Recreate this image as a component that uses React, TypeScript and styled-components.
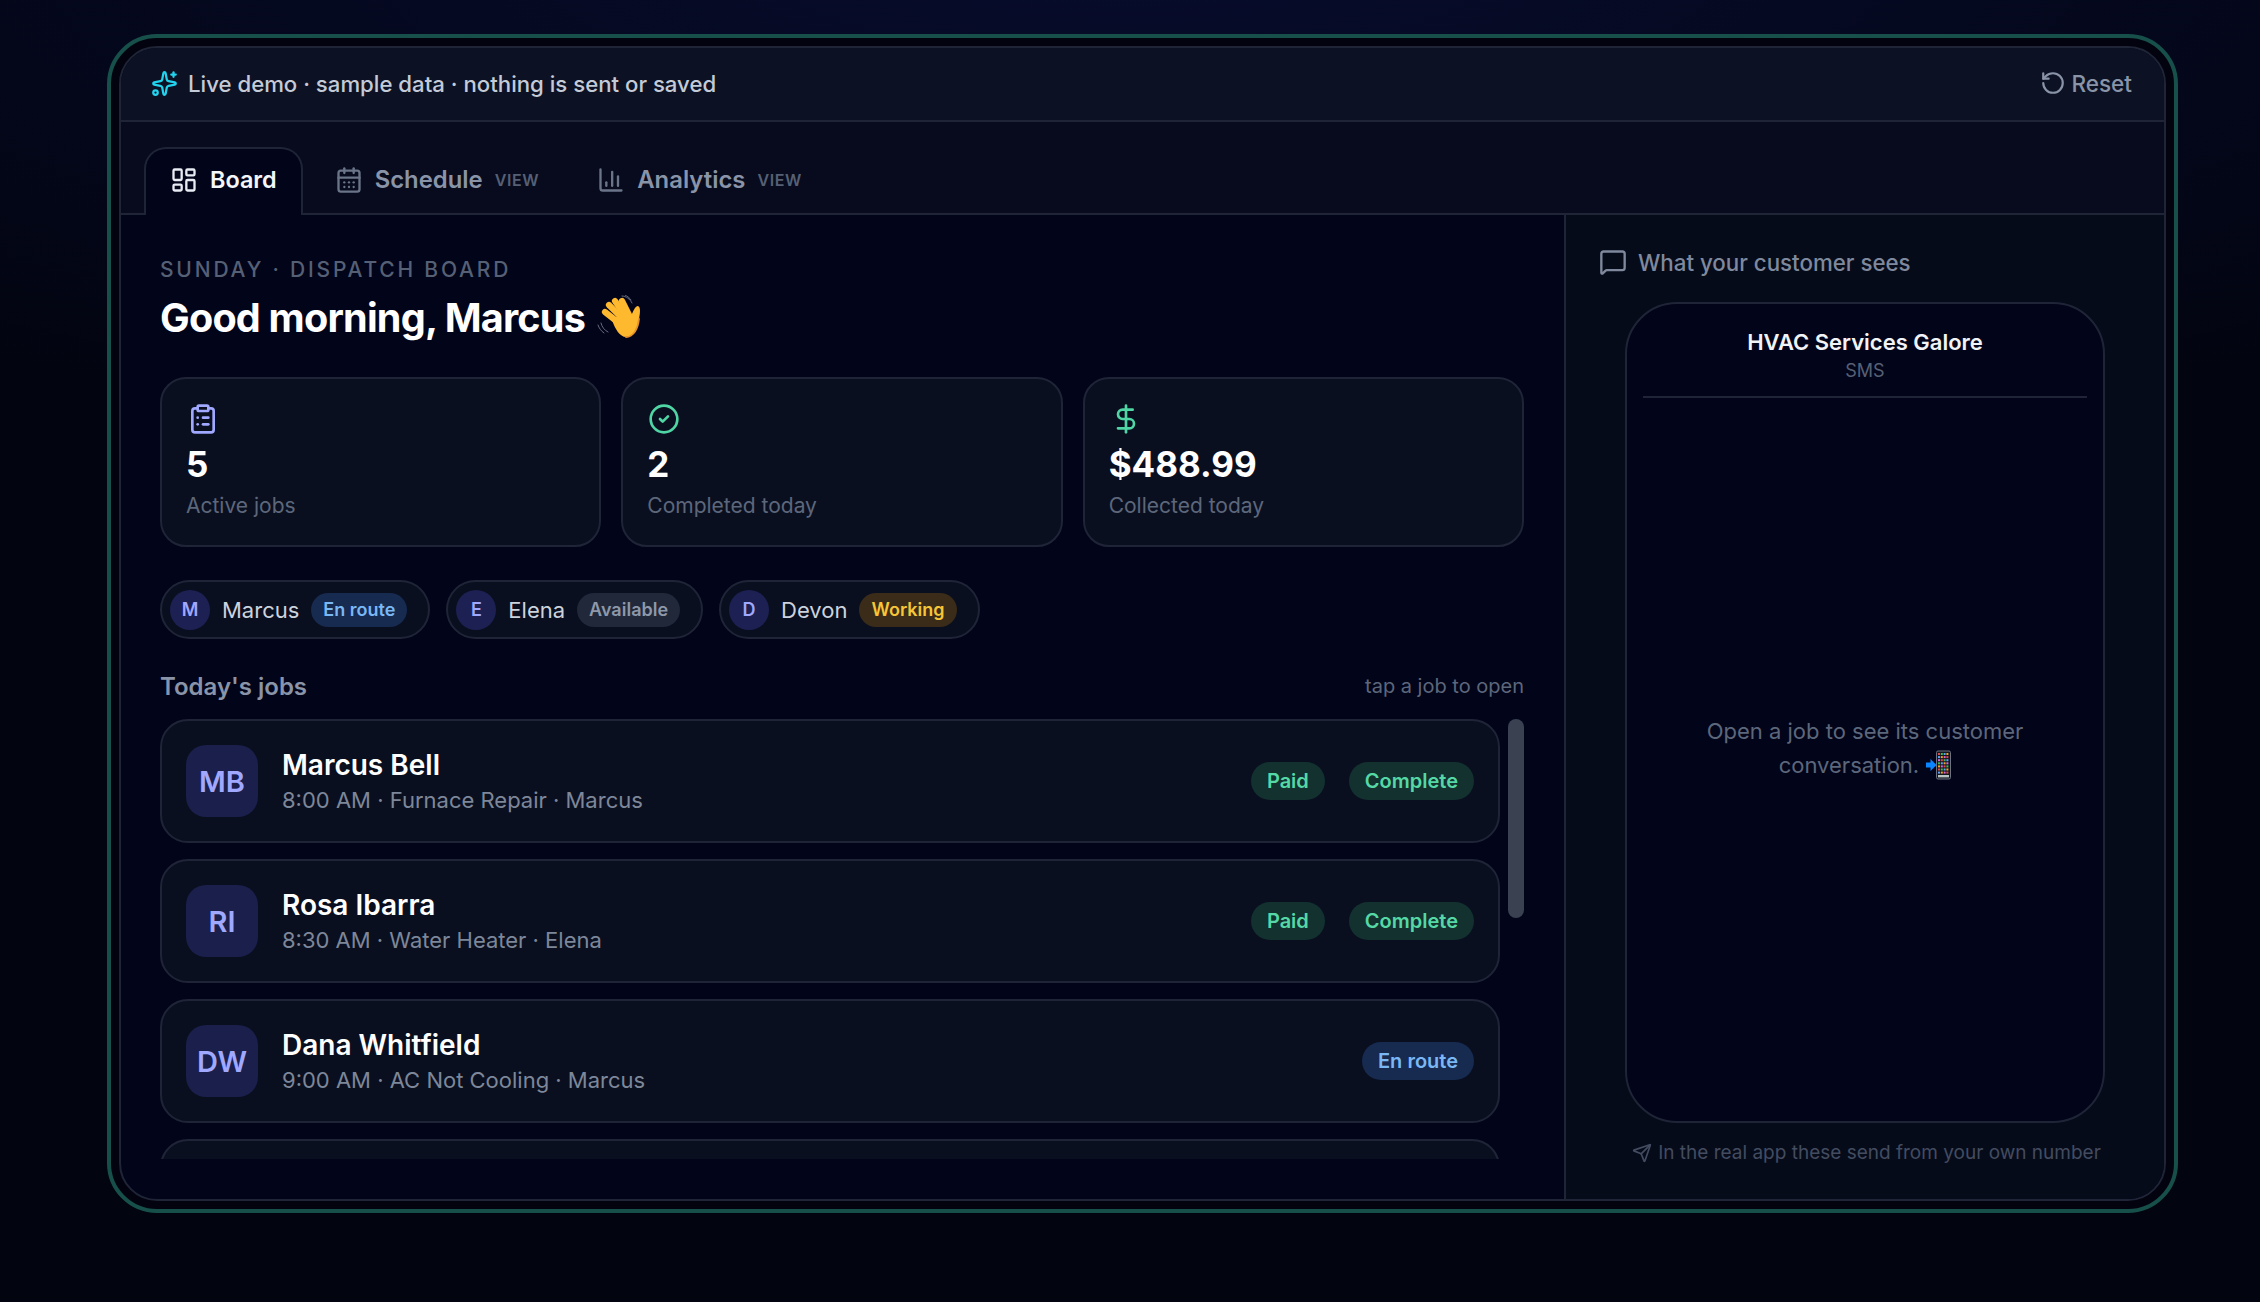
import React from 'react';
import styled, { createGlobalStyle } from 'styled-components';
import {
  CalendarDays,
  ChartColumn,
  CircleCheck,
  ClipboardList,
  DollarSign,
  LayoutDashboard,
  MessageSquare,
  RotateCcw,
  Send,
  Sparkles,
} from 'lucide-react';

const GlobalStyle = createGlobalStyle`
  html, body {
    margin: 0;
    height: 100%;
    background: #02040f;
  }
  body {
    font-family: Inter, "Noto Sans", "Liberation Sans", sans-serif;
    -webkit-font-smoothing: antialiased;
  }
  * { box-sizing: border-box; }
`;

const line = '#1f2536';

const Page = styled.div`
  width: 2260px;
  height: 1302px;
  padding: 34px 82px 89px 107px;
  overflow: hidden;
  background:
    radial-gradient(ellipse 1900px 520px at 50% -40px, #070c2c 0%, rgba(7, 12, 44, 0) 100%),
    #02040f;
`;

const Frame = styled.div`
  height: 100%;
  padding: 8px;
  border: 4px solid #17504a;
  border-radius: 50px;
  background: #02030f;
`;

const Shell = styled.div`
  height: 100%;
  display: flex;
  flex-direction: column;
  border: 2px solid ${line};
  border-radius: 38px;
  overflow: hidden;
  background: #02041a;
`;

const TopBar = styled.div`
  flex: none;
  height: 74px;
  padding: 0 32px 2px 30px;
  display: flex;
  align-items: center;
  justify-content: space-between;
  background: #0c1224;
  border-bottom: 2px solid ${line};
`;

const Notice = styled.div`
  display: flex;
  align-items: center;
  gap: 10px;
  font-size: 22.2px;
  font-weight: 500;
  color: #c4cbd7;
  svg { color: #22d3ee; }
`;

const ResetButton = styled.button`
  display: flex;
  align-items: center;
  gap: 6px;
  padding: 0;
  border: 0;
  background: none;
  font: inherit;
  font-size: 22.5px;
  font-weight: 500;
  color: #8a94a8;
`;

const TabRow = styled.div`
  flex: none;
  height: 93px;
  padding: 25px 23px 0;
  display: flex;
  gap: 6px;
  background: #070b1d;
  border-bottom: 2px solid ${line};
`;

const Tab = styled.div<{ $active?: boolean }>`
  height: 68px;
  padding: 0 24px 5px;
  display: flex;
  align-items: center;
  gap: 12px;
  font-size: ${(p) => (p.$active ? 23.4 : 23.85)}px;
  font-weight: 600;
  color: ${(p) => (p.$active ? '#f4f6fa' : '#8a94a8')};
  background: ${(p) => (p.$active ? '#02041a' : 'transparent')};
  border: 2px solid ${(p) => (p.$active ? line : 'transparent')};
  border-bottom: 0;
  border-radius: 22px 22px 0 0;
  svg { color: ${(p) => (p.$active ? '#e8ebf2' : '#6b7589')}; }
`;

const ViewTag = styled.span`
  font-size: 16px;
  font-weight: 600;
  letter-spacing: 0.04em;
  color: #566075;
`;

const Body = styled.div`
  flex: 1;
  min-height: 0;
  display: flex;
`;

const Board = styled.section`
  flex: none;
  width: 1445px;
  padding: 45px 40px 40px 39px;
  display: flex;
  flex-direction: column;
  border-right: 2px solid ${line};
`;

const Eyebrow = styled.div`
  font-size: 21px;
  line-height: 20px;
  font-weight: 500;
  letter-spacing: 2.8px;
  color: #566075;
`;

const Greeting = styled.h1`
  margin: 12px 0 0;
  display: flex;
  align-items: center;
  gap: 11px;
  font-size: 39.6px;
  line-height: 52px;
  font-weight: 700;
  letter-spacing: -0.02em;
  color: #fff;
`;

const StatGrid = styled.div`
  margin-top: 33px;
  display: grid;
  grid-template-columns: repeat(3, 1fr);
  gap: 20px;
`;

const StatCard = styled.div`
  height: 170px;
  padding: 24px 24px;
  background: #0a0f20;
  border: 2px solid ${line};
  border-radius: 26px;
`;

const StatIcon = styled.div<{ $color: string }>`
  height: 32px;
  margin-left: 1px;
  color: ${(p) => p.$color};
`;

const StatValue = styled.div`
  margin-top: 7px;
  font-size: 35px;
  line-height: 44px;
  font-weight: 700;
  color: #fff;
`;

const StatLabel = styled.div`
  margin-top: 5px;
  font-size: 21px;
  line-height: 30px;
  color: #5d677b;
`;

const CrewRow = styled.div`
  margin-top: 33px;
  display: flex;
  gap: 16px;
`;

const CrewChip = styled.div`
  height: 59px;
  padding: 0 21px 0 8px;
  display: flex;
  align-items: center;
  gap: 12px;
  background: #0a0f20;
  border: 2px solid ${line};
  border-radius: 30px;
  font-size: 22px;
  color: #cdd3dd;
`;

const CrewAvatar = styled.span`
  width: 40px;
  height: 40px;
  display: grid;
  place-items: center;
  border-radius: 50%;
  background: #1d2052;
  color: #a0a8ff;
  font-size: 18px;
  font-weight: 600;
`;

const Pill = styled.span<{ $bg: string; $fg: string; $tall?: boolean }>`
  height: ${(p) => (p.$tall ? 38 : 34)}px;
  padding: 0 ${(p) => (p.$tall ? 16 : 12)}px;
  display: inline-flex;
  align-items: center;
  border-radius: 19px;
  background: ${(p) => p.$bg};
  color: ${(p) => p.$fg};
  font-size: ${(p) => (p.$tall ? 20 : 18)}px;
  font-weight: 600;
`;

const JobsHeader = styled.div`
  margin-top: 31px;
  height: 32px;
  display: flex;
  align-items: center;
  justify-content: space-between;
`;

const JobsTitle = styled.h2`
  margin: 0;
  font-size: 24px;
  font-weight: 600;
  color: #8a94a8;
`;

const JobsHint = styled.span`
  font-size: 20px;
  color: #5d677b;
`;

const JobArea = styled.div`
  margin-top: 17px;
  flex: 1;
  min-height: 0;
  display: flex;
  gap: 8px;
`;

const JobList = styled.div`
  flex: 1;
  min-width: 0;
  display: flex;
  flex-direction: column;
  gap: 16px;
  overflow: hidden;
`;

const ScrollRail = styled.div`
  flex: none;
  width: 16px;
`;

const ScrollThumb = styled.div`
  height: 199px;
  background: #3a4252;
  border-radius: 8px;
`;

const JobCard = styled.div`
  flex: none;
  height: 124px;
  padding: 0 24px;
  display: flex;
  align-items: center;
  gap: 24px;
  background: #0a0f20;
  border: 2px solid ${line};
  border-radius: 28px;
`;

const JobAvatar = styled.div`
  flex: none;
  width: 72px;
  height: 72px;
  display: grid;
  place-items: center;
  border-radius: 20px;
  background: #1a1f4b;
  color: #a0a8ff;
  font-size: 29px;
  font-weight: 600;
`;

const JobText = styled.div`
  flex: 1;
  min-width: 0;
`;

const JobName = styled.div`
  font-size: 28px;
  line-height: 36px;
  font-weight: 600;
  color: #fff;
`;

const JobMeta = styled.div`
  margin-top: 1px;
  font-size: 22px;
  line-height: 32px;
  color: #7d8799;
`;

const JobPills = styled.div`
  display: flex;
  gap: 24px;
`;

const Preview = styled.aside`
  flex: 1;
  min-width: 0;
  padding: 27px 30px 0 33px;
  display: flex;
  flex-direction: column;
  background: #060b1a;
`;

const PreviewTitle = styled.div`
  height: 40px;
  display: flex;
  align-items: center;
  gap: 11px;
  font-size: 22.3px;
  font-weight: 500;
  color: #7f899d;
`;

const Phone = styled.div`
  margin: 20px 0 0 26px;
  width: 480px;
  height: 821px;
  padding: 22px 16px 0;
  display: flex;
  flex-direction: column;
  background: #02041a;
  border: 2px solid ${line};
  border-radius: 52px;
`;

const PhoneHead = styled.div`
  flex: none;
  height: 72px;
  text-align: center;
  border-bottom: 2px solid ${line};
`;

const PhoneName = styled.div`
  font-size: 22px;
  line-height: 32px;
  font-weight: 600;
  color: #f1f3f7;
`;

const PhoneKind = styled.div`
  margin-top: 1px;
  font-size: 18px;
  line-height: 24px;
  color: #566075;
`;

const PhoneEmpty = styled.div`
  flex: 1;
  padding: 0 40px 23px;
  display: flex;
  align-items: center;
  justify-content: center;
`;

const EmptyText = styled.p`
  margin: 0;
  text-align: center;
  font-size: 22px;
  line-height: 34px;
  color: #5d677b;
`;

const FootNote = styled.div`
  margin-top: 18px;
  display: flex;
  align-items: center;
  justify-content: center;
  gap: 6px;
  font-size: 19px;
  line-height: 24px;
  color: #434c60;
`;

const WaveEmoji = () => (
  <svg width="46" height="46" viewBox="16 10 46 46" role="img" aria-label="waving hand">
    <g fill="none" stroke="#6f7686" strokeWidth="0.9" strokeLinecap="round">
      <path d="M42 11c4 0 8 3 10 7M45 10c2 1 5 3 6 5" />
      <path d="M21 38c1 4 3 7 7 9M18 40c1 3 3 6 6 8" />
    </g>
    <g fill="none" stroke="#ffb92e" strokeLinecap="round" strokeWidth="6.2">
      <path d="M25 27l14 11" />
      <path d="M29 20l14 14" />
      <path d="M35 16l11 16" />
      <path d="M42 16l7 14" />
    </g>
    <path
      d="M32 35l16-11 3 7c2-4 4-10 7-10 3 1 2 8 1 13-1 9-5 18-13 18-6 0-11-8-14-17z"
      fill="#ffb92e"
    />
    <path d="M59 34c-1 9-5 18-13 18" fill="none" stroke="#e8912a" strokeWidth="1.8" strokeLinecap="round" />
  </svg>
);

const phoneDots = ['#e5484d', '#3fb950', '#5aa2ff', '#f5a524', '#d06be0'];

const PhoneEmoji = () => (
  <svg
    width="26"
    height="30"
    viewBox="0 0 26 30"
    role="img"
    aria-label="mobile phone with arrow"
    style={{ verticalAlign: -7 }}
  >
    <rect x="11.5" y="1" width="14" height="28" rx="1.5" fill="#15171d" stroke="#6c7280" />
    {[0, 1, 2, 3, 4, 5, 6].map((row) =>
      [0, 1, 2, 3].map((col) => (
        <rect
          key={`${row}-${col}`}
          x={13 + col * 2.8}
          y={3 + row * 3.1}
          width="2"
          height="2"
          fill={phoneDots[(row * 2 + col) % 5]}
        />
      )),
    )}
    <rect x="13" y="25" width="11" height="2.4" fill="#b9c4c2" />
    <path d="M1 12.5h4.5V9l6 6-6 6v-3.5H1z" fill="#0a84ff" />
  </svg>
);

const stats = [
  { icon: <ClipboardList size={32} strokeWidth={2} />, color: '#a0a8ff', value: '5', label: 'Active jobs' },
  { icon: <CircleCheck size={32} strokeWidth={2} />, color: '#4fd6a4', value: '2', label: 'Completed today' },
  { icon: <DollarSign size={32} strokeWidth={2} />, color: '#4fd6a4', value: '$488.99', label: 'Collected today' },
];

const pillColors = {
  Paid: { bg: '#12312f', fg: '#55d8a6' },
  Complete: { bg: '#12312f', fg: '#55d8a6' },
  'En route': { bg: '#172a50', fg: '#7ab8f5' },
  Available: { bg: '#20283a', fg: '#8e98a8' },
  Working: { bg: '#3a2c18', fg: '#f7c536' },
} as const;

type PillName = keyof typeof pillColors;

const crew: { initial: string; name: string; status: PillName }[] = [
  { initial: 'M', name: 'Marcus', status: 'En route' },
  { initial: 'E', name: 'Elena', status: 'Available' },
  { initial: 'D', name: 'Devon', status: 'Working' },
];

const jobs: { initials: string; name: string; meta: string; pills: PillName[] }[] = [
  { initials: 'MB', name: 'Marcus Bell', meta: '8:00 AM · Furnace Repair · Marcus', pills: ['Paid', 'Complete'] },
  { initials: 'RI', name: 'Rosa Ibarra', meta: '8:30 AM · Water Heater · Elena', pills: ['Paid', 'Complete'] },
  { initials: 'DW', name: 'Dana Whitfield', meta: '9:00 AM · AC Not Cooling · Marcus', pills: ['En route'] },
];

export default function App() {
  return (
    <>
      <GlobalStyle />
      <Page>
        <Frame>
          <Shell>
            <TopBar>
              <Notice>
                <Sparkles size={27} strokeWidth={2} />
                Live demo · sample data · nothing is sent or saved
              </Notice>
              <ResetButton>
                <RotateCcw size={26} strokeWidth={2} />
                Reset
              </ResetButton>
            </TopBar>
            <TabRow>
              <Tab $active>
                <LayoutDashboard size={28} strokeWidth={2} />
                Board
              </Tab>
              <Tab>
                <CalendarDays size={28} strokeWidth={2} />
                Schedule
                <ViewTag>VIEW</ViewTag>
              </Tab>
              <Tab>
                <ChartColumn size={28} strokeWidth={2} />
                Analytics
                <ViewTag>VIEW</ViewTag>
              </Tab>
            </TabRow>
            <Body>
              <Board>
                <Eyebrow>SUNDAY · DISPATCH BOARD</Eyebrow>
                <Greeting>
                  Good morning, Marcus
                  <WaveEmoji />
                </Greeting>
                <StatGrid>
                  {stats.map((s) => (
                    <StatCard key={s.label}>
                      <StatIcon $color={s.color}>{s.icon}</StatIcon>
                      <StatValue>{s.value}</StatValue>
                      <StatLabel>{s.label}</StatLabel>
                    </StatCard>
                  ))}
                </StatGrid>
                <CrewRow>
                  {crew.map((c) => (
                    <CrewChip key={c.name}>
                      <CrewAvatar>{c.initial}</CrewAvatar>
                      {c.name}
                      <Pill $bg={pillColors[c.status].bg} $fg={pillColors[c.status].fg}>
                        {c.status}
                      </Pill>
                    </CrewChip>
                  ))}
                </CrewRow>
                <JobsHeader>
                  <JobsTitle>Today's jobs</JobsTitle>
                  <JobsHint>tap a job to open</JobsHint>
                </JobsHeader>
                <JobArea>
                  <JobList>
                    {jobs.map((j) => (
                      <JobCard key={j.initials}>
                        <JobAvatar>{j.initials}</JobAvatar>
                        <JobText>
                          <JobName>{j.name}</JobName>
                          <JobMeta>{j.meta}</JobMeta>
                        </JobText>
                        <JobPills>
                          {j.pills.map((p) => (
                            <Pill key={p} $tall $bg={pillColors[p].bg} $fg={pillColors[p].fg}>
                              {p}
                            </Pill>
                          ))}
                        </JobPills>
                      </JobCard>
                    ))}
                    {/* next row peeks in under the fold */}
                    <JobCard />
                  </JobList>
                  <ScrollRail>
                    <ScrollThumb />
                  </ScrollRail>
                </JobArea>
              </Board>
              <Preview>
                <PreviewTitle>
                  <MessageSquare size={28} strokeWidth={2} />
                  What your customer sees
                </PreviewTitle>
                <Phone>
                  <PhoneHead>
                    <PhoneName>HVAC Services Galore</PhoneName>
                    <PhoneKind>SMS</PhoneKind>
                  </PhoneHead>
                  <PhoneEmpty>
                    <EmptyText>
                      Open a job to see its customer conversation. <PhoneEmoji />
                    </EmptyText>
                  </PhoneEmpty>
                </Phone>
                <FootNote>
                  <Send size={20} strokeWidth={2} />
                  In the real app these send from your own number
                </FootNote>
              </Preview>
            </Body>
          </Shell>
        </Frame>
      </Page>
    </>
  );
}
